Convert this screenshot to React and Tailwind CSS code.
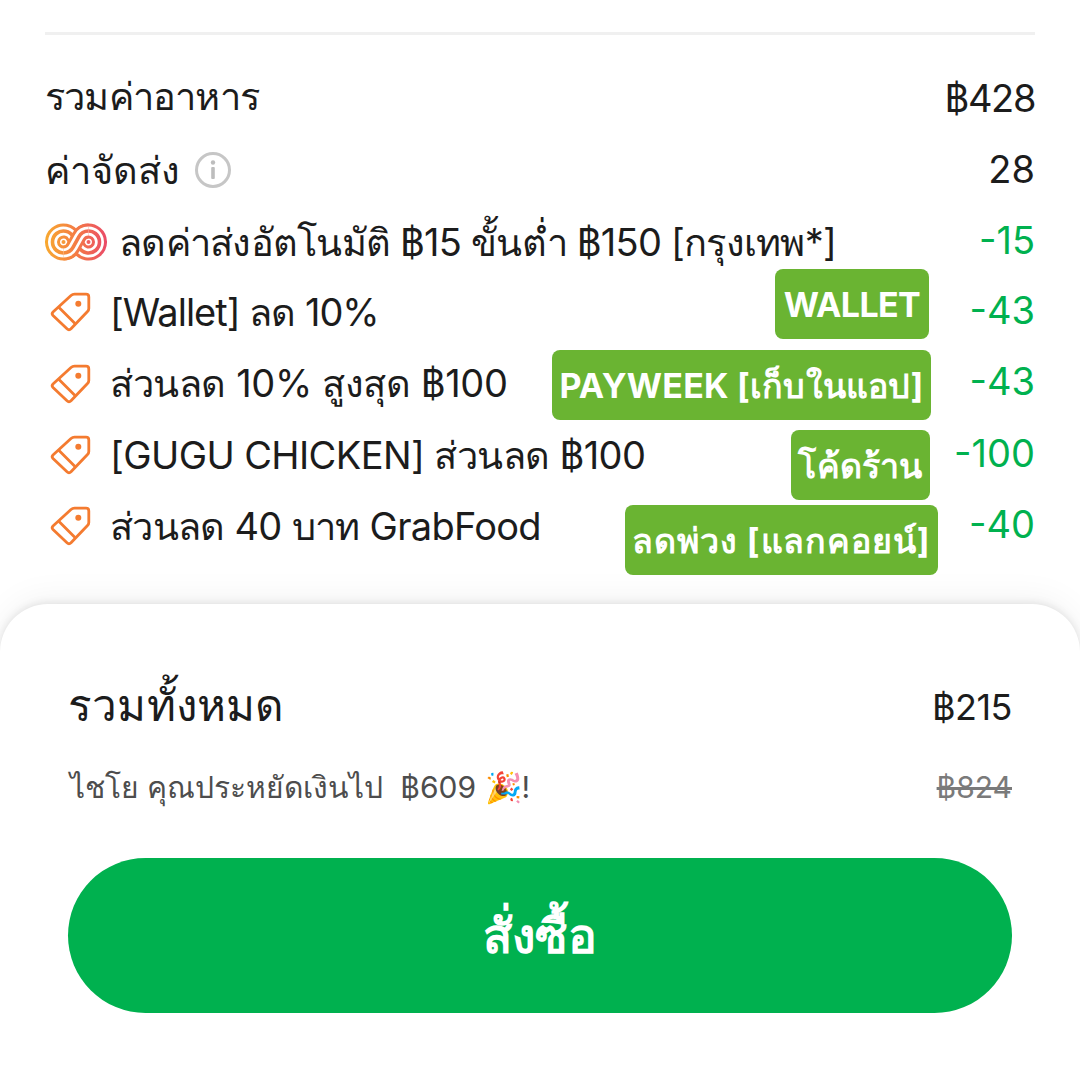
const Tag = () => (
  <svg width="42" height="42" viewBox="0 0 42 42" fill="none" stroke="#f47b30" strokeWidth="2.8" strokeLinejoin="round" strokeLinecap="round" className="shrink-0">
    <path d="M4 21 L22 4.5 Q23.5 3.2 25.5 3.2 L37 3.2 Q39.8 3.2 39.8 6 L39.8 17.5 Q39.8 19.3 38.5 20.5 L22 37.8 Q20 39.8 18 37.8 L4 24.5 Q2.3 22.8 4 21 Z" />
    <path d="M10 16.5 L25.5 32" />
    <circle cx="29.3" cy="12.7" r="3" fill="#f47b30" stroke="none" />
  </svg>
);

const loopPath = "M28.17 24.23 L33.83 13.77 A11 11 0 1 1 33.83 24.23 L28.17 13.77 A11 11 0 1 0 28.17 24.23 Z";
const overPath = "M18.5 30 A11 11 0 0 0 28.17 24.23 L33.83 13.77 A11 11 0 0 1 43.5 8";

const Wheel = () => (
  <svg width="62" height="38" viewBox="0 0 62 38" fill="none" className="shrink-0">
    <defs>
      <linearGradient id="loop" x1="0" y1="0" x2="62" y2="0" gradientUnits="userSpaceOnUse">
        <stop offset="0" stopColor="#f8a92f" />
        <stop offset="0.5" stopColor="#f47c45" />
        <stop offset="1" stopColor="#ea4a68" />
      </linearGradient>
    </defs>
    {[loopPath, overPath].map((d) => (
      <g key={d}>
        <path d={d} stroke="url(#loop)" strokeWidth="15" />
        <path d={d} stroke="#fff" strokeWidth="9" />
        <path d={d} stroke="url(#loop)" strokeWidth="3.6" />
      </g>
    ))}
    <circle cx="18.5" cy="19" r="2" fill="#f79a3a" />
    <circle cx="43.5" cy="19" r="2" fill="#ef5f5f" />
  </svg>
);

const InfoIcon = () => (
  <svg width="38" height="38" viewBox="0 0 38 38" fill="none" className="shrink-0">
    <circle cx="19" cy="19" r="16.5" stroke="#c6c6c6" strokeWidth="3" />
    <circle cx="19" cy="11.5" r="2.2" fill="#bdbdbd" />
    <rect x="17.2" y="16" width="3.6" height="12" rx="1" fill="#bdbdbd" />
  </svg>
);

const rows = [
  { label: "[Wallet] ลด 10%", code: "WALLET", price: "-43", badge: "top-[-6px] right-[106px] w-[154px]", text: "h-[71px] pt-[3px]", labelText: "tracking-[-1px]" },
  { label: "ส่วนลด 10% สูงสุด ฿100", code: "PAYWEEK [เก็บในแอป]", price: "-43", badge: "top-[4px] right-[104px] w-[379px] tracking-[0.2px]", text: "h-[72px] pt-[3px]", labelText: "tracking-[-0.4px]" },
  { label: "[GUGU CHICKEN] ส่วนลด ฿100", code: "โค้ดร้าน", price: "-100", badge: "top-[12px] right-[105px] w-[139px] tracking-[0.2px]", text: "h-[72px] pt-[2px]", labelText: "" },
  { label: "ส่วนลด 40 บาท GrabFood", code: "ลดพ่วง [แลกคอยน์]", price: "-40", badge: "top-[15px] right-[97px] w-[313px] tracking-[0.9px]", text: "h-[71px] pt-[1px]", labelText: "tracking-[-0.7px]" },
];

export default function App() {
  return (
    <div className="w-[1080px] h-[1080px] bg-white overflow-hidden flex flex-col text-[#1c1c1c] font-['Inter','Noto_Sans',sans-serif]">
      <div className="px-[45px] pt-[32px] h-[604px] flex flex-col text-[38px] tracking-[-0.6px]">
        <div className="h-[3px] bg-[#f0f0f0]" />
        <div className="flex justify-between items-center mt-[35px] h-[56px]">
          <span className="-mt-[4px] tracking-[-0.8px]">รวมค่าอาหาร</span>
          <span className="tracking-[-1.4px]">฿428</span>
        </div>
        <div className="flex justify-between items-center mt-[16px] h-[56px]">
          <span className="flex items-center gap-[14px] tracking-normal">ค่าจัดส่ง <InfoIcon /></span>
          <span className="tracking-normal -mt-[2px]">28</span>
        </div>
        <div className="flex justify-between items-center mt-[16px] mb-[5px] h-[56px]">
          <span className="flex items-center gap-3 whitespace-nowrap tracking-[-0.75px]"><Wheel />ลดค่าส่งอัตโนมัติ ฿15 ขั้นต่ำ ฿150 [กรุงเทพ*]</span>
          <span className="text-[#00b14f] tracking-normal -mt-[4px]">-15</span>
        </div>
        {rows.map((r) => (
          <div key={r.label} className={`relative flex justify-between items-center ${r.text}`}>
            <span className={`flex items-center gap-[19px] whitespace-nowrap pl-[4px] ${r.labelText}`}><Tag />{r.label}</span>
            <span className={`absolute ${r.badge} bg-[#6ab432] text-white font-bold text-[34px] h-[70px] flex items-center justify-center rounded-lg whitespace-nowrap`}>{r.code}</span>
            <span className="text-[#00b14f] tracking-normal -mt-[4px]">{r.price}</span>
          </div>
        ))}
      </div>
      <div className="flex-1 bg-white rounded-t-[48px] shadow-[0_-1px_8px_rgba(0,0,0,0.1),0_-6px_34px_rgba(0,0,0,0.05)] px-[68px] pt-[74px]">
        <div className="flex justify-between items-center">
          <span className="text-[44px] -mt-[6px] tracking-[0.2px]">รวมทั้งหมด</span>
          <span className="text-[36px] tracking-[-0.5px] -mt-[2px]">฿215</span>
        </div>
        <div className="flex justify-between items-center text-[30px] mt-[27px]">
          <span className="text-[#4d4d4d] pl-[2px]">ไชโย คุณประหยัดเงินไป&nbsp; ฿609 🎉!</span>
          <span className="line-through text-[#7a7a7a]">฿824</span>
        </div>
        <button className="w-full h-[155px] mt-[48px] rounded-full bg-[#00b14f] text-white font-bold text-[48px]">สั่งซื้อ</button>
      </div>
    </div>
  );
}
